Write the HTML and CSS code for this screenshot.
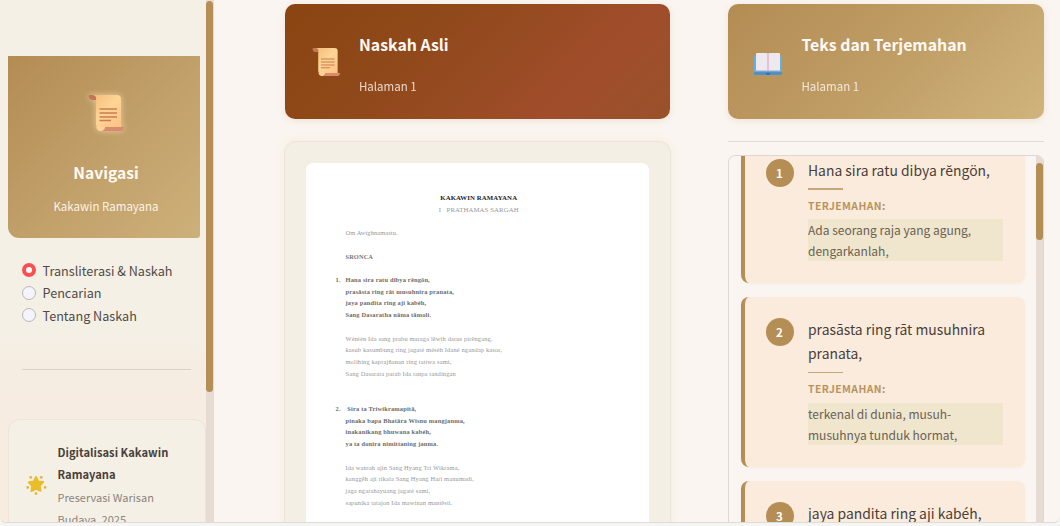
FILE: index.html
```html
<!DOCTYPE html>
<html lang="id">
<head>
<meta charset="utf-8">
<title>Kakawin Ramayana</title>
<link rel="stylesheet" href="styles.css">
</head>
<body>
<svg class="defs" width="0" height="0" aria-hidden="true">
  <defs>
    <linearGradient id="paper" x1="0" y1="0" x2="1" y2="1"><stop offset="0" stop-color="#f3b978"/><stop offset=".5" stop-color="#fdd595"/><stop offset="1" stop-color="#ffc184"/></linearGradient>
    <symbol id="scroll" viewBox="0 0 36 38">
      <path d="M2 1h27q4 0 4 4v29H12q-4 0-4-4V6H4Q1 5 2 1z" fill="url(#paper)"/>
      <path d="M1 1h4q4 1 3 5H4Q0 5 1 1z" fill="#c37757"/>
      <path d="M17 33h19q0 4-4 4H13q4-1 4-4z" fill="#d98b70"/>
      <path d="M8 31q0 6 5 6 3 0 4-4H8z" fill="#ffd397"/>
      <path d="M11.500 15H29M11.500 19H29M11.500 23H29M11.500 26.500H23" stroke="#cb7c50" stroke-width="1.300"/>
    </symbol>
  </defs>
</svg>
<div class="app">
  <aside class="sidebar">
    <div class="side-content">
      <div class="nav-head">
        <svg class="nav-icon"><use href="#scroll"/></svg>
        <h2>Navigasi</h2>
        <p>Kakawin Ramayana</p>
      </div>
      <div class="options">
        <label><i class="radio on"></i><span>Transliterasi &amp; Naskah</span></label>
        <label><i class="radio"></i><span>Pencarian</span></label>
        <label><i class="radio"></i><span>Tentang Naskah</span></label>
      </div>
      <div class="side-rule"></div>
      <div class="about">
        <svg class="star" viewBox="0 0 22 22"><path d="M10.500 2.500l2.300 4.700 5.200.600-3.500 4 .8 5.300-4.800-2-4.800 2.200.7-5.400-3.500-3.800 5.200-.7z" fill="#e9bd2b" stroke="#e9bd2b" stroke-width="2" stroke-linejoin="round"/><g fill="#e1b332"><circle cx="5" cy="3" r="1.400"/><circle cx="16" cy="3" r="1.400"/><circle cx="1.800" cy="13.500" r="1.400"/><circle cx="20" cy="13.500" r="1.400"/><circle cx="10.500" cy="20" r="1.400"/></g></svg>
        <div><strong>Digitalisasi Kakawin Ramayana</strong><p>Preservasi Warisan Budaya, 2025</p></div>
      </div>
    </div>
    <div class="side-track"><div class="side-thumb"></div></div>
  </aside>
  <main class="main">
    <section class="left">
      <header class="banner brown">
        <svg class="banner-scroll"><use href="#scroll"/></svg>
        <div><h2>Naskah Asli</h2><p>Halaman 1</p></div>
      </header>
      <div class="frame">
        <article class="page">
          <h3>KAKAWIN RAMAYANA</h3>
          <h4>I &nbsp; PRATHAMAS SARGAH</h4>
          <p class="om">Om Awighnamastu.</p>
          <p class="meter">SRONCA</p>
          <div class="verse"><b>1.</b><div>Hana sira ratu dibya rĕngön,<br>prasāsta ring rāt musuhnira pranata,<br>jaya pandita ring aji kabéh,<br>Sang Dasaratha nāma tāmoli.</div></div>
          <div class="prose">Wéntén Ida sang prabu maraga lĕwih darus pirĕngang,<br>kasub kasumbung ring jagaté méséh Idané ngandap kasor,<br>molihing kaprajñanan ring tattwa sami,<br>Sang Dasarata parab Ida tanpa tandingan</div>
          <div class="verse second"><b>2.</b><div>&nbsp;Sira ta Triwikramapitā,<br>pinaka bapa Bhatāra Wisnu mangjanma,<br>inakanikang bhuwana kabéh,<br>ya ta donira nimittaning janma.</div></div>
          <div class="prose">Ida wantah ajin Sang Hyang Tri Wikrama,<br>kanggĕh aji rikala Sang Hyang Hari manumadi,<br>jaga ngarahayuang jagaté sami,<br>sapunika tatajon Ida mawinan mantĕsti.</div>
        </article>
      </div>
    </section>
    <section class="right">
      <header class="banner gold">
        <svg class="book" viewBox="0 0 28 23"><path d="M0 3h28v18q0 1-1 1H1q-1 0-1-1z" fill="#68aedb"/><path d="M0 19h28v2q0 1-1 1H1q-1 0-1-1z" fill="#4c91c7"/><path d="M2 1q0-1 1-1h9q2 0 2 1 0-1 2-1h9q1 0 1 1v17H2z" fill="#eee9ef"/><path d="M2 17.500h24" stroke="#dbbdd8"/><path d="M14 1v17" stroke="#d8afcc" stroke-width="1.300"/><path d="M12 20h4v1q-2 2-4 0z" fill="#286fae"/></svg>
        <div><h2>Teks dan Terjemahan</h2><p>Halaman 1</p></div>
      </header>
      <div class="right-rule"></div>
      <div class="list">
        <div class="cards">
          <div class="card"><span class="num">1</span><div class="body"><h3>Hana sira ratu dibya rĕngön,</h3><div class="dash bold"></div><h5>TERJEMAHAN:</h5><p>Ada seorang raja yang agung, dengarkanlah,</p></div></div>
          <div class="card"><span class="num">2</span><div class="body"><h3>prasāsta ring rāt musuhnira pranata,</h3><div class="dash"></div><h5>TERJEMAHAN:</h5><p>terkenal di dunia, musuh-musuhnya tunduk hormat,</p></div></div>
          <div class="card"><span class="num">3</span><div class="body"><h3>jaya pandita ring aji kabéh,</h3><div class="dash"></div></div></div>
        </div>
        <div class="list-track"><div class="list-thumb"></div></div>
      </div>
    </section>
  </main>
</div>
</body>
</html>
```
FILE: styles.css
```css
* { box-sizing: border-box; }
body {
  margin: 0;
  height: 526px;
  overflow: hidden;
  background: #f5f5f4;
  color: #4a3f38;
  font-family: "Source Sans Pro", "Noto Sans CJK SC", "Noto Sans", sans-serif;
}
h2, h3, h4, h5, p { margin: 0; }
.defs { display: block; }
.app {
  display: flex;
  width: 1060px;
  height: 523px;
  overflow: hidden;
  border-bottom: 1px solid #dedbd8;
  border-radius: 0 0 6px 6px;
  background: #faf5f0;
}

.sidebar {
  display: flex;
  flex: 0 0 214px;
  background: linear-gradient(#f4f0e6 0, #f4f0e6 62%, #f6ede2 70%, #f8ebdf 100%);
}
.side-content { width: 206px; padding: 55.500px 0 0 7.500px; }
.side-track { width: 8px; background: #e7dcd4; }
.side-thumb { width: 7px; height: 391px; margin-top: 1px; border-radius: 4px; background: #b58e55; }
.nav-head {
  display: flex;
  flex-direction: column;
  align-items: center;
  width: 192px;
  height: 182.500px;
  padding: 38px 0 0 5px;
  border-radius: 0 0 3px 11px;
  background: linear-gradient(135deg, #b38c53, #c19f69 50%, #cdb079);
  color: #fffaf2;
}
.nav-icon { width: 36px; height: 38px; filter: drop-shadow(0 0 3px #ffe9b8aa); }
.nav-head h2 { margin-top: 26px; font-size: 15.600px; line-height: 28px; }
.nav-head p { margin-top: 10px; font-size: 11.500px; line-height: 20px; color: #fbf2e3; }
.options { padding: 21px 0 0 14px; }
.options label { display: flex; align-items: center; gap: 7px; height: 22.600px; font-size: 12.650px; white-space: nowrap; color: #514a46; }
.radio { width: 14px; height: 14px; border: 1px solid #b9b6b7; border-radius: 50%; background: #f4f4fc; }
.radio.on { border: 4.500px solid #fa5052; background: #fff; }
.side-rule { width: 169px; height: 1px; margin: 42px 0 49px 14px; background: #ddd0c5; }
.about {
  display: flex;
  width: 198px;
  height: 130px;
  padding: 21px 0 0 17px;
  border: 1px solid #eee4d7;
  border-radius: 11px;
  background: #f4f0e6;
}
.star { flex: 0 0 21px; height: 22px; margin: 33px 11px 0 0; }
.about strong { display: block; width: 120px; font-size: 11.200px; line-height: 22.500px; }
.about p { width: 115px; font-size: 11px; line-height: 22.500px; color: #8c847c; }

.main { display: flex; gap: 57.500px; padding: 4px 0 0 71px; }
.left { width: 385px; }
.right { width: 316px; }
.banner {
  display: flex;
  align-items: center;
  height: 115px;
  border-radius: 10px;
  color: #fffaf6;
  box-shadow: 0 2px 7px #b38c5326;
}
.brown { padding-left: 27px; background: linear-gradient(135deg, #8a4412, #90491a 35%, #a04d2b 75%, #99522a); }
.gold { padding-left: 26px; background: linear-gradient(135deg, #b38c53, #bf9d65 50%, #cfb47c); }
.banner-scroll { width: 28px; height: 30px; margin-right: 19px; }
.book { width: 28px; height: 23px; margin: 6px 20px 0 0; }
.banner h2 { font-size: 15.850px; line-height: 26px; white-space: nowrap; }
.banner p { margin-top: 18px; font-size: 11.500px; line-height: 20px; opacity: .8; }
.banner > div { padding-top: 4px; }

.frame {
  width: 387px;
  height: 400px;
  margin: 22px 0 0 -1px;
  padding: 21px;
  border: 1px solid #ebe5d9;
  border-radius: 12px;
  background: #f3efe4;
  box-shadow: 0 0 9px #d6ba7b26;
}
.page {
  height: 400px;
  padding: 29px 0 0 39.500px;
  border-radius: 7px;
  background: #fff;
  color: #979797;
  font: 6.400px/11.720px "Liberation Serif", serif;
  letter-spacing: .15px;
  white-space: nowrap;
}
.page h3 { color: #222; font-size: 6.800px; line-height: 11.720px; letter-spacing: .1px; text-align: center; padding-right: 37px; }
.page h4 { font-size: 6.800px; line-height: 11.720px; letter-spacing: .08px; font-weight: 400; text-align: center; padding-right: 37px; color: #999; }
.om { margin-top: 11.720px; letter-spacing: .1px; }
.meter { margin-top: 11.720px; color: #777; font-weight: 700; letter-spacing: .1px; }
.verse { display: flex; margin: 11.720px 0 0 -10px; color: #6c6c6c; font-weight: 700; letter-spacing: .18px; }
.verse b { width: 10px; }
.prose { margin-top: 11.720px; }
.verse.second { margin-top: 23.440px; }

.right-rule { height: 1px; margin-top: 22px; background: #e2dcd6; }
.list {
  display: flex;
  height: 400px;
  margin-top: 13px;
  overflow: hidden;
  border: 1px solid #ded8d2;
  border-radius: 7px;
}
.cards { width: 308px; padding: 0 11px 0 12px; margin-top: -18.500px; }
.list-track { width: 8px; height: 400px; background: #e7dcd4; }
.list-thumb { width: 7px; height: 77px; margin-top: 7px; border-radius: 4px; background: #b58e55; }
.card {
  display: flex;
  width: 284px;
  margin-bottom: 14px;
  padding: 21px 22px 22px 21px;
  border-left: 4px solid #b58e55;
  border-radius: 8px;
  background: #faebdd;
  box-shadow: 0 1px 3px #b38c5310;
}
.num {
  flex: 0 0 28px;
  height: 28px;
  margin-right: 14.500px;
  border-radius: 50%;
  background: #b58e55;
  color: #fff;
  font-size: 11.500px;
  font-weight: 700;
  line-height: 28px;
  text-align: center;
}
.body { flex: 1; }
.body h3 { font-size: 13.900px; font-weight: 400; line-height: 23.700px; white-space: normal; }
.dash { width: 35px; height: 1px; margin: 6px 0 7.500px; background: #c6a77c; }
.dash.bold { height: 2px; margin-bottom: 6.500px; }
.body h5 { font-size: 10.400px; line-height: 18px; letter-spacing: .4px; color: #b9935d; }
.body p { margin-top: 4.500px; background: #efe6cd; color: #6b6052; font-size: 12px; line-height: 21px; }
```
